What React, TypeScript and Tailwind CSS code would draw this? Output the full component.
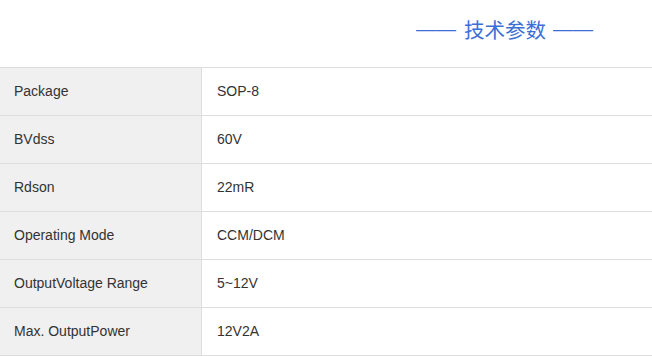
const specs = [
  { label: "Package", value: "SOP-8" },
  { label: "BVdss", value: "60V" },
  { label: "Rdson", value: "22mR" },
  { label: "Operating Mode", value: "CCM/DCM" },
  { label: "OutputVoltage Range", value: "5~12V" },
  { label: "Max. OutputPower", value: "12V2A" },
];

const App = () => {
  return (
    <div
      className="w-[652px] h-[356px] bg-white overflow-hidden"
      style={{ fontFamily: '"Liberation Sans", "Noto Sans CJK SC", sans-serif' }}
    >
      {/* Title */}
      <div className="h-[67px] flex items-center justify-end pr-[58px]">
        <h2 className="flex items-center gap-[7px] text-[20px] leading-none text-[#3b6fd6] font-normal pb-[9px]">
          <span className="w-[41px] overflow-hidden whitespace-nowrap">——</span>
          <span className="text-[20.5px]" style={{ fontFamily: '"Noto Sans CJK SC", sans-serif' }}>
            技术参数
          </span>
          <span className="w-[41px] overflow-hidden whitespace-nowrap">——</span>
        </h2>
      </div>

      {/* Spec table */}
      <div className="border-b border-[#dddddd]">
        {specs.map((row) => (
          <div key={row.label} className="flex h-[48px] border-t border-[#dddddd] text-[14px] text-[#333333]">
            <div className="w-[202px] shrink-0 bg-[#f0f0f0] border-r border-[#dddddd] flex items-center pl-[14px]">
              {row.label}
            </div>
            <div className="flex-1 flex items-center pl-[15px]">{row.value}</div>
          </div>
        ))}
      </div>
    </div>
  );
};

export default App;
